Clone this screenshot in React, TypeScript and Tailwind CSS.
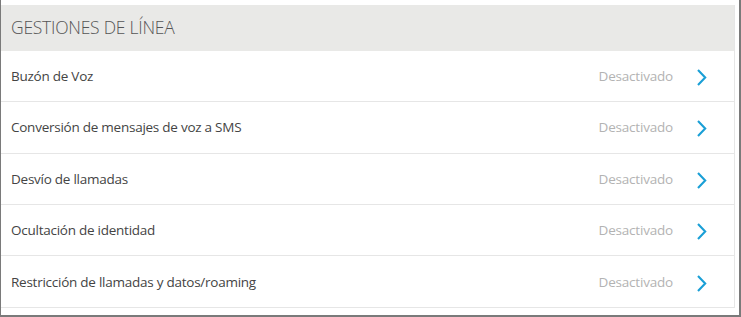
const rows = [
  "Buzón de Voz",
  "Conversión de mensajes de voz a SMS",
  "Desvío de llamadas",
  "Ocultación de identidad",
  "Restricción de llamadas y datos/roaming",
];

function Chevron() {
  return (
    <svg width="12" height="17" viewBox="0 0 12 17" fill="none" className="shrink-0 mt-[3px]">
      <path d="M2 1 L9.2 8.5 L2 16" stroke="#1a9fd6" strokeWidth="2.1" />
    </svg>
  );
}

export default function App() {
  return (
    <div
      className="w-[741px] h-[317px] bg-white border-l border-r-2 border-b-2 border-[#7a7a7a] pt-[5px] pr-[4px]"
      style={{ fontFamily: '"Open Sans", "Liberation Sans", sans-serif' }}
    >
      <div className="border-r border-b border-[#e6e6e6]">
        <div className="h-[46px] bg-[#e9e9e7] flex items-center pl-[10px]">
          <h2 className="text-[17.5px] font-light tracking-[-0.25px] text-[#555] leading-none">
            GESTIONES DE LÍNEA
          </h2>
        </div>
        {rows.map((label, i) => (
          <div
            key={label}
            className={`h-[51.25px] flex items-center pl-[10px] pr-[26px] ${
              i < rows.length - 1 ? "border-b border-[#e6e6e6]" : ""
            }`}
          >
            <span className="flex-1 text-[13.5px] text-[#444] tracking-[-0.25px]">{label}</span>
            <span className="text-[13.5px] text-[#b3b3b3] mr-[23px] tracking-[-0.2px]">Desactivado</span>
            <Chevron />
          </div>
        ))}
      </div>
    </div>
  );
}
